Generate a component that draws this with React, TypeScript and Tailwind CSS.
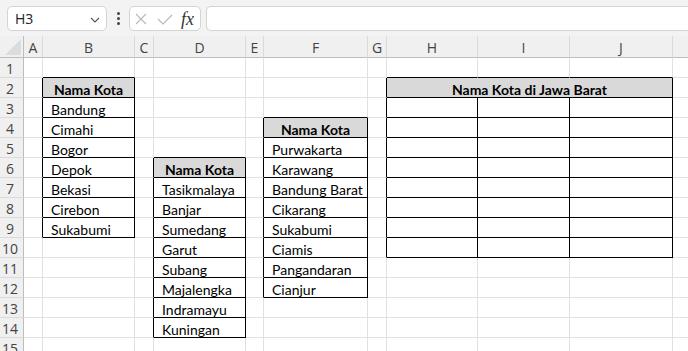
import React from "react";

type Cell = { text?: string; bold?: boolean; head?: boolean };

const cols = ["A", "B", "C", "D", "E", "F", "G", "H", "I", "J", ""];
const widths = [19, 92, 19, 92, 18, 104, 19, 91, 92, 103, 40];

const listB = ["Bandung", "Cimahi", "Bogor", "Depok", "Bekasi", "Cirebon", "Sukabumi"];
const listD = ["Tasikmalaya", "Banjar", "Sumedang", "Garut", "Subang", "Majalengka", "Indramayu", "Kuningan"];
const listF = ["Purwakarta", "Karawang", "Bandung Barat", "Cikarang", "Sukabumi", "Ciamis", "Pangandaran", "Cianjur"];

// ranges with thin black borders: [col from, col to, row from, row to]
const boxes: [number, number, number, number][] = [
  [1, 1, 2, 9],
  [3, 3, 6, 14],
  [5, 5, 4, 12],
  [7, 9, 2, 10],
];

const boxed = (r: number, c: number) =>
  boxes.some(([c1, c2, r1, r2]) => c >= c1 && c <= c2 && r >= r1 && r <= r2);

const getCell = (r: number, c: number): Cell => {
  if (c === 1 && r === 2) return { text: "Nama Kota", head: true };
  if (c === 1 && r >= 3 && r <= 9) return { text: listB[r - 3] };
  if (c === 3 && r === 6) return { text: "Nama Kota", head: true };
  if (c === 3 && r >= 7 && r <= 14) return { text: listD[r - 7] };
  if (c === 5 && r === 4) return { text: "Nama Kota", head: true };
  if (c === 5 && r >= 5 && r <= 12) return { text: listF[r - 5] };
  if (c === 7 && r === 2) return { text: "Nama Kota di Jawa Barat", head: true };
  return {};
};

const rows = Array.from({ length: 15 }, (_, i) => i + 1);

export default function App() {
  return (
    <div className="w-[688px] h-[351px] overflow-hidden bg-white relative" style={{ fontFamily: "'Noto Sans', sans-serif" }}>
      {/* formula bar */}
      <div className="h-[36px] bg-[#f3f3f3] flex items-start pt-[6px] pl-[7px]">
        <div className="w-[100px] h-[25px] bg-white border border-[#d4d4d4] rounded-[5px] flex items-center justify-between pl-[7px] pr-[6px]">
          <span className="text-[14px] text-[#222]" style={{ fontFamily: "'Open Sans', sans-serif" }}>H3</span>
          <svg width="10" height="6" viewBox="0 0 10 6" className="mt-[2px]">
            <path d="M1 1 L5 5 L9 1" fill="none" stroke="#555" strokeWidth="1.1" />
          </svg>
        </div>
        <div className="w-[22px] h-[25px] flex flex-col items-center justify-center gap-[2px]">
          <div className="w-[3px] h-[3px] bg-[#444] rounded-full" />
          <div className="w-[3px] h-[3px] bg-[#444] rounded-full" />
          <div className="w-[3px] h-[3px] bg-[#444] rounded-full" />
        </div>
        <div className="w-[72px] h-[25px] bg-white border border-[#d4d4d4] rounded-[5px] flex items-center pl-[5px]">
          <svg width="12" height="12" viewBox="0 0 12 12">
            <path d="M1 1 L11 11 M11 1 L1 11" stroke="#b8b8b8" strokeWidth="1.1" />
          </svg>
          <svg width="16" height="12" viewBox="0 0 16 12" className="ml-[10px]">
            <path d="M1 6 L6 11 L15 2" fill="none" stroke="#b8b8b8" strokeWidth="1.1" />
          </svg>
          <span className="ml-[8px] text-[18px] italic text-[#333] leading-none" style={{ fontFamily: "'Liberation Serif', serif" }}>fx</span>
        </div>
        <div className="ml-[5px] flex-1 h-[25px] bg-white border border-[#d4d4d4] rounded-l-[5px] border-r-0" />
      </div>

      {/* sheet grid */}
      <div
        className="grid"
        style={{ gridTemplateColumns: `24px ${widths.map((w) => w + "px").join(" ")}`, gridTemplateRows: "22px repeat(15, 20px)" }}
      >
        <div className="bg-[#f0f0f0] border-r border-b border-[#bdbdbd] relative">
          <svg width="16" height="16" viewBox="0 0 16 16" className="absolute right-[2px] bottom-[2px]">
            <polygon points="16,0 16,16 0,16" fill="#dcdcdc" />
          </svg>
        </div>
        {cols.map((c, i) => (
          <div
            key={i}
            className="bg-[#f0f0f0] border-r border-b border-r-[#dadada] border-b-[#bdbdbd] flex items-center justify-center text-[14px] text-[#444] pt-[2px]"
            style={{ fontFamily: "'Open Sans', sans-serif" }}
          >
            {c}
          </div>
        ))}
        {rows.map((r) => (
          <React.Fragment key={r}>
            <div
              className="bg-[#f0f0f0] border-r border-b border-r-[#bdbdbd] border-b-[#dadada] flex items-center justify-center pr-[3px] pt-[1px] text-[14px] text-[#444]"
              style={{ fontFamily: "'Open Sans', sans-serif" }}
            >
              {r}
            </div>
            {cols.map((_, c) => {
              if (r === 2 && (c === 8 || c === 9)) return null;
              const cell = getCell(r, c);
              const merged = r === 2 && c === 7;
              const lastC = merged ? 9 : c;
              const rightBlack = boxed(r, lastC) || boxed(r, lastC + 1);
              const bottomBlack = boxed(r, c) || boxed(r + 1, c);
              return (
                <div
                  key={c}
                  className={`border-r border-b flex items-center pt-[3px] overflow-visible whitespace-nowrap text-[14px] text-black ${
                    rightBlack ? "border-r-black" : "border-r-[#e1e1e1]"
                  } ${bottomBlack ? "border-b-black" : "border-b-[#e1e1e1]"} ${
                    cell.head ? "bg-[#d9d9d9] font-bold justify-center" : "pl-[8px]"
                  } ${merged ? "col-span-3" : ""}`}
                  style={{ fontFamily: "Lato, 'Liberation Sans', sans-serif" }}
                >
                  {cell.text}
                </div>
              );
            })}
          </React.Fragment>
        ))}
      </div>
    </div>
  );
}
